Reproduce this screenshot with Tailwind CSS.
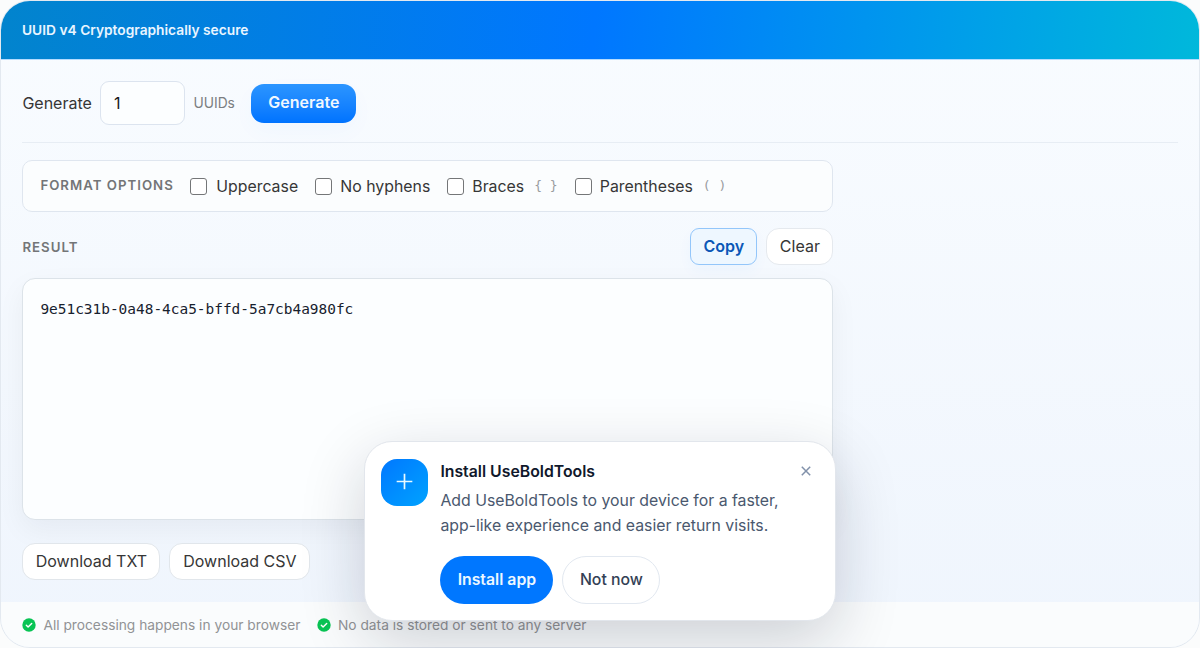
<!DOCTYPE html>
<html lang="en">
<head>
<meta charset="utf-8">
<title>UUID Generator</title>
<script src="https://cdn.jsdelivr.net/npm/@tailwindcss/browser@4"></script>
</head>
<body class="h-[648px] overflow-hidden bg-[#fbfcfc] font-['Inter',sans-serif] text-[15.85px] leading-6 text-[#363636]">
<main class="flex h-[648px] flex-col overflow-hidden rounded-[30px] border border-[#e3e9f0] bg-linear-to-b from-[#f9fcff] to-[#eff5fd]">
  <header class="flex h-[59px] shrink-0 items-center border-b border-[#b5dcff] bg-[linear-gradient(95deg,#0284cd_0%,#0077ff_49.5%,#00b8db_100%)] px-[21px] text-[13.75px] font-semibold text-[#e9f5ff]">UUID v4 Cryptographically secure</header>
  <section class="flex flex-1 flex-col px-[21.4px]">
    <div class="mt-[21px] flex h-[62px] items-start border-b border-[#e7edf4]">
      <div class="flex h-[44px] items-center">
        <label class="w-[78px] text-[16px]">Generate</label>
        <div class="flex h-[44px] w-[85px] items-center rounded-[9px] border border-[#dce4ef] bg-[#fcfeff] px-[12.5px] text-[16px] text-[#171717]">1</div>
        <span class="ml-2 w-[58px] text-[13.8px] text-[#7b7e81]">UUIDs</span>
        <button class="h-[39px] w-[105px] rounded-[13px] bg-linear-to-b from-[#2b95ff] to-[#0073ff] pb-0.5 text-[16px] font-semibold text-[#f1f8ff] shadow-[0_8px_22px_rgba(0,119,255,0.03)]">Generate</button>
      </div>
    </div>
    <div class="mt-[17px] flex h-[52px] w-[811px] items-center rounded-[10px] border border-[#dfe6ef] bg-[#fbfdfe] pl-[17px]">
      <span class="w-[149.9px] pb-0.5 text-[13.25px] font-semibold tracking-[1px] text-[#737577]">FORMAT OPTIONS</span>
      <label class="flex w-[125px] items-center"><input type="checkbox" class="mr-[9px] size-[17px] appearance-none rounded-[3px] border border-[#747678] bg-white"><span class="pt-px">Uppercase</span></label>
      <label class="flex w-[132px] items-center"><input type="checkbox" class="mr-[8px] size-[17px] appearance-none rounded-[3px] border border-[#747678] bg-white"><span class="pt-px">No hyphens</span></label>
      <label class="flex w-[127.5px] items-center"><input type="checkbox" class="mr-[8px] size-[17px] appearance-none rounded-[3px] border border-[#747678] bg-white"><span class="pt-px">Braces</span><span class="ml-[10px] whitespace-pre font-['DejaVu_Sans_Mono',monospace] text-[13px] text-[#999c9e]">{ }</span></label>
      <label class="flex items-center"><input type="checkbox" class="mr-[8px] size-[17px] appearance-none rounded-[3px] border border-[#747678] bg-white"><span class="pt-px">Parentheses</span><span class="ml-[10px] whitespace-pre font-['DejaVu_Sans_Mono',monospace] text-[13px] text-[#999c9e]">( )</span></label>
    </div>
    <div class="mt-[16px] flex h-[38px] w-[811px] items-center">
      <span class="pb-px text-[13.25px] font-semibold tracking-[1px] text-[#737577]">RESULT</span>
      <button class="mb-px ml-auto h-[37px] w-[67px] rounded-[9px] border border-[#93c6fa] bg-[#eef7ff] pb-px text-[16px] font-semibold text-[#0b57b7] shadow-[0_6px_14px_rgba(0,119,255,0.04)]">Copy</button>
      <button class="mb-px ml-[9px] h-[37px] w-[67px] rounded-[13px] border border-[#e5e9ee] bg-white pb-px text-[16px]">Clear</button>
    </div>
    <div class="mt-[12px] h-[242px] w-[811px] rounded-[13px] border border-[#dce3e9] bg-[#fcfeff] px-[17px] pt-[18px] font-['DejaVu_Sans_Mono',monospace] text-[14.45px] text-[#17212e] shadow-[0_10px_28px_rgba(15,23,42,0.05)]">9e51c31b-0a48-4ca5-bffd-5a7cb4a980fc</div>
    <div class="mt-[23px] flex gap-[9px]">
      <button class="h-[37px] w-[138px] rounded-[13px] border border-[#e1e6eb] bg-white pb-0.5 text-[16px]">Download TXT</button>
      <button class="h-[37px] w-[141px] rounded-[13px] border border-[#e1e6eb] bg-white pb-0.5 text-[16px]">Download CSV</button>
    </div>
  </section>
  <footer class="flex h-[45px] shrink-0 items-center bg-[#fafcfd] px-[21.4px] text-[13.75px] text-[#919395]">
    <svg class="mr-[7px] size-[14px]" viewBox="0 0 14 14" fill="none"><circle cx="7" cy="7" r="6.7" fill="#08c454"/><path d="M4.3 7.3l1.8 1.8 3.6-3.7" stroke="#fff" stroke-width="1.4" stroke-linecap="round" stroke-linejoin="round"/></svg>
    <span class="w-[273.6px]">All processing happens in your browser</span>
    <svg class="mr-[7px] size-[14px]" viewBox="0 0 14 14" fill="none"><circle cx="7" cy="7" r="6.7" fill="#08c454"/><path d="M4.3 7.3l1.8 1.8 3.6-3.7" stroke="#fff" stroke-width="1.4" stroke-linecap="round" stroke-linejoin="round"/></svg>
    <span>No data is stored or sent to any server</span>
  </footer>
</main>
<aside class="absolute left-[364px] top-[441px] flex h-[180px] w-[472px] rounded-[28px] border border-[#e2e6ec] bg-white pl-[16px] pt-[16.5px] shadow-[0_20px_64px_rgba(15,23,42,0.19)]">
  <div class="flex size-[47px] shrink-0 items-center justify-center rounded-[16px] bg-linear-to-br from-[#0077ff] to-[#00a2ff] pb-px">
    <svg class="size-[17px]" viewBox="0 0 18 18" stroke="#e8faff" stroke-width="1.8"><path d="M9 .7v16.6M.7 9h16.6"/></svg>
  </div>
  <div class="ml-[12.4px] flex-1">
    <div class="flex h-[26px] items-center text-[15.8px] font-semibold text-[#10182b]">Install UseBoldTools
      <svg class="mb-px ml-auto mr-[24px] size-[10px]" viewBox="0 0 10 10" stroke="#8191aa" stroke-width="1.5"><path d="M.8.8l8.4 8.4M9.2.8L.8 9.2"/></svg>
    </div>
    <p class="mt-[3px] whitespace-nowrap text-[15.83px] leading-[25.5px] text-[#4a586e]">Add UseBoldTools to your device for a faster,<br>app-like experience and easier return visits.</p>
    <div class="mt-[17.5px] flex gap-[9px]">
      <button class="h-[47.5px] w-[113px] rounded-full bg-[#0077ff] pt-px text-[15.8px] font-semibold text-[#edf7ff]">Install app</button>
      <button class="h-[47.5px] w-[98px] rounded-full border border-[#e2e8f0] bg-white pt-px text-[15.8px] font-medium text-[#334155]">Not now</button>
    </div>
  </div>
</aside>
</body>
</html>
